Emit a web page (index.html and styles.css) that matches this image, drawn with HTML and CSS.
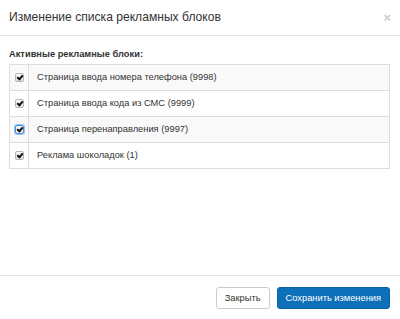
FILE: index.html
```html
<!DOCTYPE html>
<html lang="ru">

<head>
	<meta charset="utf-8">
	<title>Изменение списка рекламных блоков</title>
	<link rel="stylesheet" href="styles.css">
</head>

<body>
	<div class="modal">
		<div class="modal-header">
			<h4 class="modal-title">Изменение списка рекламных блоков</h4>
			<span class="close">&times;</span>
		</div>

		<div class="modal-body">
			<label class="section-label">Активные рекламные блоки:</label>
			<table class="blocks">
				<tbody>
					<tr>
						<td class="check"><span class="box"></span></td>
						<td>Страница ввода номера телефона (9998)</td>
					</tr>
					<tr>
						<td class="check"><span class="box"></span></td>
						<td>Страница ввода кода из СМС (9999)</td>
					</tr>
					<tr>
						<td class="check"><span class="box focused"></span></td>
						<td>Страница перенаправления (9997)</td>
					</tr>
					<tr>
						<td class="check"><span class="box"></span></td>
						<td>Реклама шоколадок (1)</td>
					</tr>
				</tbody>
			</table>
		</div>

		<div class="modal-footer">
			<button class="btn btn-default">Закрыть</button>
			<button class="btn btn-primary">Сохранить изменения</button>
		</div>
	</div>
</body>

</html>
```

FILE: styles.css
```css
html, body {
	margin: 0;
	height: 100%;
}

body {
	background-color: #fff;
	color: #333;
	font-family: 'Liberation Sans', Arial, sans-serif;
	font-size: 9.3px;
	line-height: 1.4;
}

.modal {
	display: flex;
	flex-direction: column;
	height: 100%;
}

.modal-header {
	display: flex;
	align-items: center;
	justify-content: space-between;
	height: 35px;
	padding: 0 10px 0 9px;
	border-bottom: 1px solid #e5e5e5;
}
.modal-title {
	margin: 0;
	font-size: 12.1px;
	font-weight: normal;
	line-height: 15px;
}
.close {
	color: #000;
	opacity: .2;
	font-size: 13px;
	font-weight: bold;
	line-height: 1;
	margin-right: -1px;
}

.modal-body {
	flex: 1;
	padding: 11px 10px 0 9px;
}

.section-label {
	display: block;
	font-weight: bold;
	line-height: 14px;
	margin-bottom: 3px;
}

.blocks {
	width: 100%;
	border-collapse: collapse;
	border: 1px solid #ddd;
}
.blocks td {
	height: 25px;
	padding: 0 8px;
	border: 1px solid #ddd;
	vertical-align: middle;
}
.blocks tr:nth-child(2n-1) {
	background-color: #f9f9f9;
}
.blocks td.check {
	width: 18px;
	padding: 0;
	text-align: center;
}

.box {
	display: inline-block;
	position: relative;
	width: 7px;
	height: 7px;
	border: 1px solid #b4b4b4;
	border-radius: 2px;
	background: linear-gradient(#fcfcfc, #e2e2e2);
	vertical-align: middle;
	margin-top: -1px;
}
.box::after {
	content: '';
	position: absolute;
	left: 2px;
	top: 0;
	width: 2px;
	height: 4px;
	border: solid #111;
	border-width: 0 2px 2px 0;
	transform: rotate(40deg);
}
.box.focused {
	border-color: #4a90d9;
	box-shadow: 0 0 0 1px #9cc4ee;
}

.modal-footer {
	display: flex;
	justify-content: flex-end;
	gap: 7px;
	padding: 11px 10px 10px;
	border-top: 1px solid #e5e5e5;
}

.btn {
	height: 22px;
	padding: 0 8px;
	border: 1px solid transparent;
	border-radius: 3px;
	font-family: inherit;
	font-size: 9.3px;
	cursor: pointer;
}
.btn-default {
	color: #333;
	background-color: #fff;
	border-color: #ccc;
}
.btn-primary {
	color: #fff;
	background-color: #0e70b8;
	border-color: #0c63a4;
}
```
